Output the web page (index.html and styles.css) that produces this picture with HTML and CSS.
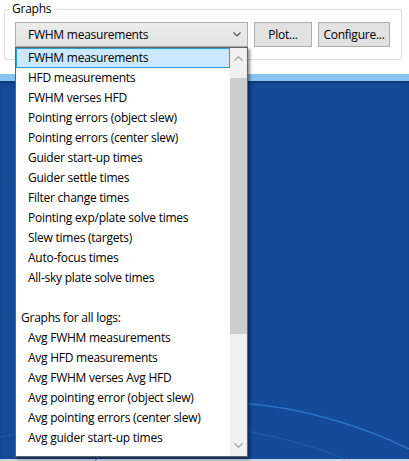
FILE: index.html
```html
<!DOCTYPE html>
<html>
<head>
<meta charset="utf-8">
<link rel="stylesheet" href="styles.css">
</head>
<body>
<div class="screen">
  <div class="window">
    <div class="group">
      <span class="legend">Graphs</span>
      <div class="controls">
        <div class="combo">
          <span>FWHM measurements</span>
          <svg class="chev" width="8" height="5" viewBox="0 0 8 5"><path d="M0.5 0.5 L4 4 L7.5 0.5" fill="none" stroke="#555" stroke-width="1.2"/></svg>
        </div>
        <div class="btn btn-plot">Plot...</div>
        <div class="btn btn-conf">Configure...</div>
      </div>
    </div>
  </div>
  <div class="desktop">
    <svg class="wallpaper" width="409" height="380" viewBox="0 0 409 380">
      <path d="M240 322 C300 326 360 344 409 368" fill="none" stroke="#2f74c8" stroke-width="1.3"/>
      <path d="M245 350 C290 358 320 368 345 378" fill="none" stroke="#235fb0" stroke-width="1"/>
      <path d="M0 356 C20 352 40 350 60 350" fill="none" stroke="#235fb0" stroke-width="1"/>
      <path d="M95 380 C98 376 102 372 108 368" fill="none" stroke="#2f74c8" stroke-width="1"/>
    </svg>
  </div>
  <div class="taskbar"></div>

  <div class="dropdown">
    <ul class="list">
      <li class="item selected">FWHM measurements</li>
      <li class="item">HFD measurements</li>
      <li class="item">FWHM verses HFD</li>
      <li class="item">Pointing errors (object slew)</li>
      <li class="item">Pointing errors (center slew)</li>
      <li class="item">Guider start-up times</li>
      <li class="item">Guider settle times</li>
      <li class="item">Filter change times</li>
      <li class="item">Pointing exp/plate solve times</li>
      <li class="item">Slew times (targets)</li>
      <li class="item">Auto-focus times</li>
      <li class="item">All-sky plate solve times</li>
      <li class="item"></li>
      <li class="item header">Graphs for all logs:</li>
      <li class="item">Avg FWHM measurements</li>
      <li class="item">Avg HFD measurements</li>
      <li class="item">Avg FWHM verses Avg HFD</li>
      <li class="item">Avg pointing error (object slew)</li>
      <li class="item">Avg pointing errors (center slew)</li>
      <li class="item">Avg guider start-up times</li>
    </ul>
    <div class="scrollbar">
      <div class="arrow up">
        <svg width="9" height="5" viewBox="0 0 9 5"><path d="M0.5 4.5 L4.5 0.7 L8.5 4.5" fill="none" stroke="#a0a0a0" stroke-width="1.2"/></svg>
      </div>
      <div class="thumb"></div>
      <div class="track"></div>
      <div class="arrow down">
        <svg width="9" height="5" viewBox="0 0 9 5"><path d="M0.5 0.5 L4.5 4.3 L8.5 0.5" fill="none" stroke="#a0a0a0" stroke-width="1.2"/></svg>
      </div>
    </div>
  </div>
</div>
</body>
</html>
```

FILE: styles.css
```css
* { box-sizing: border-box; }
html, body { margin: 0; padding: 0; }
body {
  font-family: "Open Sans", "Noto Sans", sans-serif;
  font-size: 12px;
  letter-spacing: -0.25px;
  color: #000;
  background: #fff;
}
.screen {
  position: relative;
  width: 409px;
  height: 461px;
  display: flex;
  flex-direction: column;
  overflow: hidden;
}
.window {
  height: 74px;
  background: #fff;
  padding: 9px 7px 0 4px;
}
.group {
  position: relative;
  height: 51px;
  border: 1px solid #dcdcdc;
  border-radius: 3px;
  padding: 12px 0 0 10px;
}
.legend {
  position: absolute;
  left: 5px;
  top: -9px;
  background: #fff;
  padding: 0 3px 0 2px;
  line-height: 15px;
}
.controls {
  display: flex;
  gap: 6px;
}
.combo {
  width: 233px;
  height: 25px;
  border: 1px solid #adadad;
  background: linear-gradient(#ececec, #e3e3e3);
  display: flex;
  align-items: center;
  justify-content: space-between;
  padding: 0 6px 0 12px;
  line-height: 23px;
}
.chev { display: block; }
.btn {
  height: 25px;
  border: 1px solid #adadad;
  background: #e1e1e1;
  display: flex;
  align-items: center;
  justify-content: center;
}
.btn-plot { width: 58px; }
.btn-conf { width: 72px; }
.desktop {
  position: relative;
  flex: 1;
  background: #144a97;
  border-top: 7px solid #88c4f2;
  box-shadow: inset 0 3px 3px -1px rgba(0, 20, 60, 0.35);
}
.wallpaper {
  position: absolute;
  left: 0;
  top: 0;
}
.taskbar {
  height: 2px;
  background: #cdd6e4;
}
.dropdown {
  position: absolute;
  left: 15px;
  top: 47px;
  width: 233px;
  height: 410px;
  border: 1px solid #646464;
  background: #fff;
  display: flex;
  box-shadow: 2px 2px 3px rgba(0, 0, 0, 0.45);
  overflow: hidden;
}
.list {
  list-style: none;
  margin: 0;
  padding: 0;
  width: 214px;
  flex: none;
}
.item {
  height: 20px;
  line-height: 19px;
  padding-left: 12px;
  white-space: nowrap;
}
.item.header { padding-left: 5px; }
.item.selected {
  background: #cce8ff;
  border: 1px solid #26a0da;
  padding-left: 11px;
  line-height: 17px;
}
.scrollbar {
  width: 17px;
  flex: none;
  display: flex;
  flex-direction: column;
  background: #f0f0f0;
}
.arrow {
  display: flex;
  align-items: center;
  justify-content: center;
}
.arrow.up { height: 30px; padding-bottom: 10px; }
.arrow.down { height: 22px; }
.thumb {
  height: 256px;
  background: #cdcdcd;
}
.track { flex: 1; }
```
